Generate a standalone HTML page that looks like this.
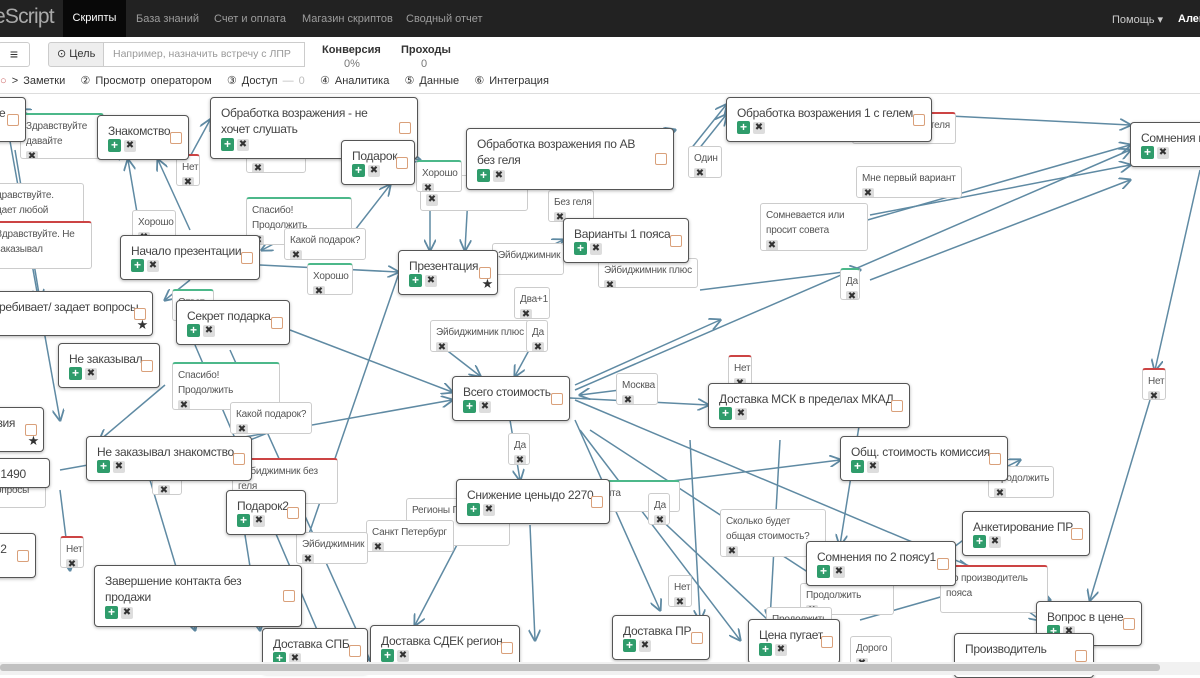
<!DOCTYPE html>
<html><head><meta charset="utf-8"><style>
*{box-sizing:border-box;margin:0;padding:0}
body{width:1200px;height:675px;overflow:hidden;background:#fff;font-family:"Liberation Sans","DejaVu Sans",sans-serif;position:relative}
.nav{position:absolute;left:0;top:0;width:1200px;height:37px;background:#222;color:#9d9d9d;font-size:11px}
.nav span{position:absolute;top:13px}
.logo{position:absolute;left:-6px;top:5px;font-size:21px;color:#aaa;letter-spacing:-0.8px}
.act{position:absolute;left:63px;top:0;width:63px;height:37px;background:#080808;color:#fff;font-size:11px;text-align:center;line-height:37px}
.tb{position:absolute;left:0;top:37px;width:1200px;height:57px;background:#fff;border-bottom:1px solid #ddd;font-size:11px;color:#333}
.n{position:absolute;background:#fff;border:1px solid #555;border-radius:4px;box-shadow:0 1px 3px rgba(0,0,0,.3);font-size:12px;letter-spacing:-0.3px;color:#444;padding:7px 10px;line-height:16px;white-space:nowrap;overflow:hidden}
.n .ic{position:absolute;left:10px;bottom:6px}
.g{display:inline-block;width:13px;height:13px;background:#2f9c6b;border-radius:2px;color:#fff;font-size:12px;line-height:12px;text-align:center;font-weight:bold;vertical-align:middle;letter-spacing:0}
.x{display:inline-block;width:12px;height:12px;background:#ddd;border-radius:2px;color:#333;font-size:10px;line-height:12px;text-align:center;margin-left:3px;vertical-align:middle;letter-spacing:0}
.n .cb{position:absolute;right:6px;top:50%;margin-top:-6px;width:12px;height:12px;border:1.5px solid #d9a07a;border-radius:2px;background:#fff}
.a{position:absolute;background:#fff;border:1px solid #ccc;border-radius:3px;font-size:10px;letter-spacing:-0.2px;color:#555;padding:4px 5px;line-height:15px;white-space:nowrap;overflow:hidden}
.a .x{margin-left:0;display:block;margin-top:2px}
.gt{border-top:2px solid #4cb88a}.rt{border-top:2px solid #c44}
svg{position:absolute;left:0;top:0}
</style></head><body>
<svg width="1200" height="675" style="top:0">
<defs><marker id="m" markerWidth="8" markerHeight="8" refX="7" refY="4" orient="auto"><path d="M0,0 L8,4 L0,8" fill="none" stroke="#5f8aa3" stroke-width="1.2"/></marker></defs>
<g stroke="#5f8aa3" stroke-width="1.5" fill="none" marker-end="url(#m)">
<path d="M15,150 L40,300"/><path d="M8,130 L60,420"/><path d="M140,230 L128,160"/><path d="M190,230 L158,160"/>
<path d="M180,175 L210,120"/><path d="M190,280 L165,300"/><path d="M300,230 L262,250"/>
<path d="M260,265 L398,272"/><path d="M355,230 L390,185"/><path d="M380,150 L420,160"/>
<path d="M430,210 L430,250"/><path d="M470,160 L465,250"/><path d="M500,270 L563,240"/>
<path d="M600,155 L675,130"/><path d="M690,150 L726,105"/><path d="M690,160 L726,115"/>
<path d="M930,115 L1130,125"/><path d="M850,225 L1130,145"/><path d="M870,215 L1130,165"/><path d="M870,280 L1130,180"/>
<path d="M700,290 L860,270"/><path d="M575,385 L720,320"/><path d="M575,390 L1130,150"/>
<path d="M570,398 L708,405"/><path d="M620,390 L580,395"/><path d="M540,330 L515,376"/>
<path d="M440,345 L480,376"/><path d="M290,330 L452,392"/><path d="M60,470 L452,400"/>
<path d="M165,385 L100,440"/><path d="M250,440 L300,420"/><path d="M400,270 L300,560"/>
<path d="M510,420 L520,480"/><path d="M590,430 L820,580"/><path d="M575,420 L660,610"/>
<path d="M580,430 L740,640"/><path d="M575,400 L1050,600"/><path d="M600,490 L840,460"/>
<path d="M1150,400 L1090,600"/><path d="M1200,170 L1155,370"/><path d="M1000,470 L1020,460"/>
<path d="M960,560 L1040,620"/><path d="M950,550 L990,520"/><path d="M860,620 L1000,580"/>
<path d="M245,535 L260,630"/><path d="M530,525 L535,640"/><path d="M470,520 L415,625"/>
<path d="M60,490 L70,570"/><path d="M30,420 L10,430"/><path d="M150,480 L195,630"/>
<path d="M195,345 L330,660"/><path d="M230,350 L370,660"/><path d="M120,160 L20,110"/>
<path d="M780,440 L770,620"/><path d="M690,440 L700,620"/><path d="M640,500 L800,650"/>
<path d="M860,420 L840,545"/>
</g></svg>

<div class="nav"><div class="logo">eScript</div><div class="act">Скрипты</div>
<span style="left:136px">База знаний</span><span style="left:214px">Счет и оплата</span><span style="left:302px">Магазин скриптов</span><span style="left:406px">Сводный отчет</span>
<span style="left:1112px;color:#ccc">Помощь ▾</span><span style="left:1178px;color:#fff;font-weight:bold">Алек</span></div>
<div class="tb">
<div style="position:absolute;left:-2px;top:5px;width:32px;height:25px;border:1px solid #ccc;border-radius:3px;text-align:center;line-height:22px;font-size:14px">≡</div>
<div style="position:absolute;left:48px;top:5px;width:56px;height:25px;border:1px solid #ccc;background:#eee;border-radius:3px 0 0 3px;line-height:23px;padding-left:8px">⊙ Цель</div>
<div style="position:absolute;left:103px;top:5px;width:202px;height:25px;border:1px solid #ccc;line-height:23px;padding-left:9px;color:#999;font-size:10.5px;white-space:nowrap;overflow:hidden">Например, назначить встречу с ЛПР</div>
<div style="position:absolute;left:322px;top:7px;font-weight:bold">Конверсия</div><div style="position:absolute;left:344px;top:21px;color:#777">0%</div>
<div style="position:absolute;left:401px;top:7px;font-weight:bold">Проходы</div><div style="position:absolute;left:421px;top:21px;color:#777">0</div>
<div style="position:absolute;left:0;top:37px;white-space:nowrap;word-spacing:2px"><span style="color:#c66">○</span> &gt; Заметки &nbsp; ② Просмотр оператором &nbsp; ③ Доступ <span style="color:#bbb">— 0</span> &nbsp; ④ Аналитика &nbsp; ⑤ Данные &nbsp; ⑥ Интеграция</div>
</div>

<div class="a gt" style="left:20px;top:113px;width:84px;height:46px">Здравствуйте<br>давайте<span class="x">✖</span></div>
<div class="a" style="left:-10px;top:183px;width:94px;height:48px">дравствуйте.<br>дает любой</div>
<div class="a rt" style="left:-10px;top:221px;width:102px;height:48px">Здравствуйте. Не<br>заказывал</div>
<div class="a rt" style="left:176px;top:154px;width:24px;height:32px">Нет<span class="x">✖</span></div>
<div class="a" style="left:132px;top:210px;width:44px;height:32px">Хорошо<span class="x">✖</span></div>
<div class="a" style="left:246px;top:141px;width:60px;height:32px">Ответ<span class="x">✖</span></div>
<div class="a gt" style="left:246px;top:197px;width:106px;height:48px">Спасибо!<br>Продолжить<span class="x">✖</span></div>
<div class="a" style="left:284px;top:228px;width:82px;height:32px">Какой подарок?<span class="x">✖</span></div>
<div class="a gt" style="left:307px;top:263px;width:46px;height:32px">Хорошо<span class="x">✖</span></div>
<div class="a" style="left:420px;top:175px;width:108px;height:36px"><span class="x" style="margin-top:14px">✖</span></div>
<div class="a gt" style="left:416px;top:160px;width:46px;height:32px">Хорошо<span class="x">✖</span></div>
<div class="a" style="left:548px;top:190px;width:46px;height:32px">Без геля<span class="x">✖</span></div>
<div class="a" style="left:558px;top:150px;width:80px;height:32px">Эйбиджимник с геля</div>
<div class="a" style="left:688px;top:146px;width:34px;height:32px">Один<span class="x">✖</span></div>
<div class="a rt" style="left:852px;top:112px;width:104px;height:32px;text-align:right">теля</div>
<div class="a" style="left:856px;top:166px;width:106px;height:32px">Мне первый вариант<span class="x">✖</span></div>
<div class="a" style="left:760px;top:203px;width:108px;height:48px">Сомневается или<br>просит совета<span class="x">✖</span></div>
<div class="a gt" style="left:840px;top:268px;width:20px;height:32px">Да<span class="x">✖</span></div>
<div class="a" style="left:492px;top:243px;width:72px;height:32px">Эйбиджимник</div>
<div class="a" style="left:598px;top:258px;width:100px;height:30px">Эйбиджимник плюс<span class="x">✖</span></div>
<div class="a" style="left:430px;top:320px;width:100px;height:32px">Эйбиджимник плюс<span class="x">✖</span></div>
<div class="a" style="left:514px;top:287px;width:36px;height:32px">Два+1<span class="x">✖</span></div>
<div class="a" style="left:526px;top:320px;width:22px;height:32px">Да<span class="x">✖</span></div>
<div class="a gt" style="left:172px;top:289px;width:42px;height:32px">Ответ<span class="x">✖</span></div>
<div class="a gt" style="left:172px;top:362px;width:108px;height:48px">Спасибо!<br>Продолжить<span class="x">✖</span></div>
<div class="a" style="left:230px;top:402px;width:82px;height:32px">Какой подарок?<span class="x">✖</span></div>
<div class="a rt" style="left:232px;top:458px;width:106px;height:46px">Эйбиджимник без<br>геля</div>
<div class="a" style="left:152px;top:463px;width:30px;height:32px">Нет<span class="x">✖</span></div>
<div class="a" style="left:-10px;top:478px;width:56px;height:30px">опросы</div>
<div class="a" style="left:616px;top:373px;width:42px;height:32px">Москва<span class="x">✖</span></div>
<div class="a rt" style="left:728px;top:355px;width:24px;height:32px">Нет<span class="x">✖</span></div>
<div class="a" style="left:508px;top:433px;width:22px;height:32px">Да<span class="x">✖</span></div>
<div class="a gt" style="left:588px;top:480px;width:92px;height:32px">Почта</div>
<div class="a" style="left:648px;top:493px;width:22px;height:32px">Да<span class="x">✖</span></div>
<div class="a" style="left:406px;top:498px;width:104px;height:48px">Регионы П</div>
<div class="a" style="left:366px;top:520px;width:88px;height:32px">Санкт Петербург<span class="x">✖</span></div>
<div class="a" style="left:296px;top:532px;width:72px;height:32px">Эйбиджимник<span class="x">✖</span></div>
<div class="a rt" style="left:60px;top:536px;width:24px;height:32px">Нет<span class="x">✖</span></div>
<div class="a" style="left:720px;top:509px;width:106px;height:48px">Сколько будет<br>общая стоимость?<span class="x">✖</span></div>
<div class="a" style="left:668px;top:575px;width:24px;height:32px">Нет<span class="x">✖</span></div>
<div class="a" style="left:800px;top:583px;width:94px;height:32px">Продолжить<span class="x">✖</span></div>
<div class="a" style="left:766px;top:607px;width:66px;height:20px">Продолжить</div>
<div class="a" style="left:850px;top:636px;width:42px;height:32px">Дорого<span class="x">✖</span></div>
<div class="a" style="left:988px;top:466px;width:66px;height:32px">Продолжить<span class="x">✖</span></div>
<div class="a rt" style="left:940px;top:565px;width:108px;height:48px">Но производитель<br>пояса</div>
<div class="a rt" style="left:1142px;top:368px;width:24px;height:32px">Нет<span class="x">✖</span></div>

<div class="n" style="left:-12px;top:97px;width:38px;height:45px;padding-left:2px">ме<span class="cb"></span></div>
<div class="n" style="left:97px;top:115px;width:92px;height:45px">Знакомство<span class="cb"></span><div class="ic"><span class="g">+</span><span class="x">✖</span></div></div>
<div class="n" style="left:210px;top:97px;width:208px;height:62px">Обработка возражения - не<br>хочет слушать<span class="cb"></span><div class="ic"><span class="g">+</span><span class="x">✖</span></div></div>
<div class="n" style="left:341px;top:140px;width:74px;height:45px">Подарок<span class="cb"></span><div class="ic"><span class="g">+</span><span class="x">✖</span></div></div>
<div class="n" style="left:466px;top:128px;width:208px;height:62px">Обработка возражения по АВ<br>без геля<span class="cb"></span><div class="ic"><span class="g">+</span><span class="x">✖</span></div></div>
<div class="n" style="left:726px;top:97px;width:206px;height:45px">Обработка возражения 1 с гелем<span class="cb"></span><div class="ic"><span class="g">+</span><span class="x">✖</span></div></div>
<div class="n" style="left:1130px;top:122px;width:90px;height:45px">Сомнения п<div class="ic"><span class="g">+</span><span class="x">✖</span></div></div>
<div class="n" style="left:120px;top:235px;width:140px;height:45px">Начало презентации<span class="cb"></span><div class="ic"><span class="g">+</span><span class="x">✖</span></div></div>
<div class="n" style="left:398px;top:250px;width:100px;height:45px">Презентация<span class="cb"></span><div class="ic"><span class="g">+</span><span class="x">✖</span></div><span style="position:absolute;right:4px;bottom:2px;font-size:13px;color:#333">★</span></div>
<div class="n" style="left:563px;top:218px;width:126px;height:45px">Варианты 1 пояса<span class="cb"></span><div class="ic"><span class="g">+</span><span class="x">✖</span></div></div>
<div class="n" style="left:-12px;top:291px;width:165px;height:45px">ребивает/ задает вопросы<span class="cb"></span><span style="position:absolute;right:4px;bottom:2px;font-size:13px;color:#333">★</span></div>
<div class="n" style="left:176px;top:300px;width:114px;height:45px">Секрет подарка<span class="cb"></span><div class="ic"><span class="g">+</span><span class="x">✖</span></div></div>
<div class="n" style="left:58px;top:343px;width:102px;height:45px">Не заказывал<span class="cb"></span><div class="ic"><span class="g">+</span><span class="x">✖</span></div></div>
<div class="n" style="left:452px;top:376px;width:118px;height:45px">Всего стоимость<span class="cb"></span><div class="ic"><span class="g">+</span><span class="x">✖</span></div></div>
<div class="n" style="left:708px;top:383px;width:202px;height:45px">Доставка МСК в пределах МКАД<span class="cb"></span><div class="ic"><span class="g">+</span><span class="x">✖</span></div></div>
<div class="n" style="left:-12px;top:407px;width:56px;height:45px;padding-left:2px">нзия<span class="cb"></span><span style="position:absolute;right:4px;bottom:2px;font-size:13px;color:#333">★</span></div>
<div class="n" style="left:86px;top:436px;width:166px;height:45px">Не заказывал знакомство<span class="cb"></span><div class="ic"><span class="g">+</span><span class="x">✖</span></div></div>
<div class="n" style="left:-12px;top:458px;width:62px;height:30px;padding-left:2px">а 1490</div>
<div class="n" style="left:840px;top:436px;width:168px;height:45px">Общ. стоимость комиссия<span class="cb"></span><div class="ic"><span class="g">+</span><span class="x">✖</span></div></div>
<div class="n" style="left:226px;top:490px;width:80px;height:45px">Подарок2<span class="cb"></span><div class="ic"><span class="g">+</span><span class="x">✖</span></div></div>
<div class="n" style="left:456px;top:479px;width:154px;height:45px">Снижение ценыдо 2270<span class="cb"></span><div class="ic"><span class="g">+</span><span class="x">✖</span></div></div>
<div class="n" style="left:962px;top:511px;width:128px;height:45px">Анкетирование ПР<span class="cb"></span><div class="ic"><span class="g">+</span><span class="x">✖</span></div></div>
<div class="n" style="left:-12px;top:533px;width:48px;height:45px;padding-left:2px">я 2<span class="cb"></span></div>
<div class="n" style="left:806px;top:541px;width:150px;height:45px">Сомнения по 2 поясу1<span class="cb"></span><div class="ic"><span class="g">+</span><span class="x">✖</span></div></div>
<div class="n" style="left:94px;top:565px;width:208px;height:62px">Завершение контакта без<br>продажи<span class="cb"></span><div class="ic"><span class="g">+</span><span class="x">✖</span></div></div>
<div class="n" style="left:612px;top:615px;width:98px;height:45px">Доставка ПР<span class="cb"></span><div class="ic"><span class="g">+</span><span class="x">✖</span></div></div>
<div class="n" style="left:748px;top:619px;width:92px;height:45px">Цена пугает<span class="cb"></span><div class="ic"><span class="g">+</span><span class="x">✖</span></div></div>
<div class="n" style="left:1036px;top:601px;width:106px;height:45px">Вопрос в цене<span class="cb"></span><div class="ic"><span class="g">+</span><span class="x">✖</span></div></div>
<div class="n" style="left:262px;top:628px;width:106px;height:45px">Доставка СПБ<span class="cb"></span><div class="ic"><span class="g">+</span><span class="x">✖</span></div></div>
<div class="n" style="left:370px;top:625px;width:150px;height:45px">Доставка СДЕК регион<span class="cb"></span><div class="ic"><span class="g">+</span><span class="x">✖</span></div></div>
<div class="n" style="left:954px;top:633px;width:140px;height:45px">Производитель<span class="cb"></span></div>
<div style="position:absolute;left:0;top:662px;width:1200px;height:13px;background:#f1f1f1"></div>
<div style="position:absolute;left:0;top:664px;width:1160px;height:7px;background:#c1c1c1;border-radius:3px"></div>
</body></html>
